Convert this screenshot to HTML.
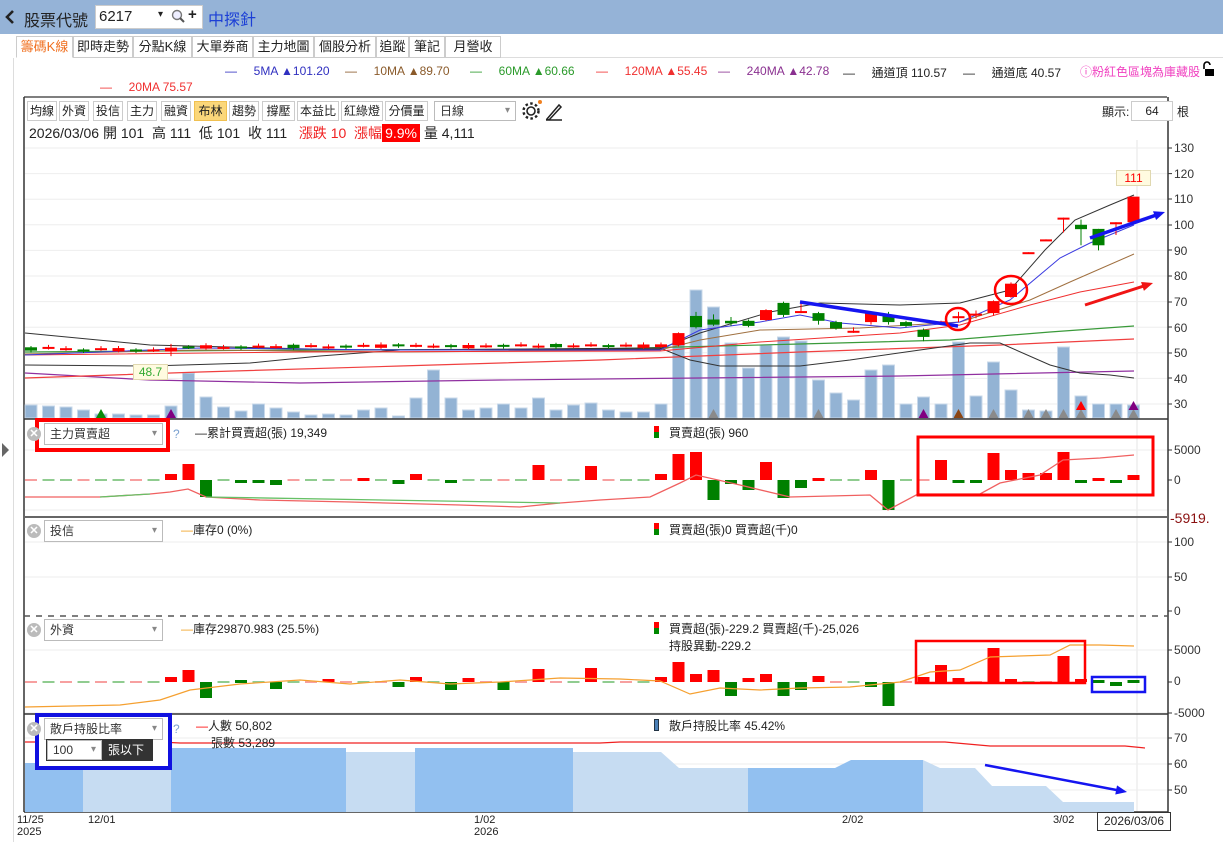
<!DOCTYPE html>
<html><head><meta charset="utf-8">
<style>
*{box-sizing:border-box}
body{margin:0;width:1223px;height:842px;overflow:hidden;background:#fff;font-family:"Liberation Sans","Noto Sans CJK TC",sans-serif;font-size:13px;color:#222;position:relative}
.a{position:absolute;white-space:nowrap}
.tab{position:absolute;top:36px;height:22px;border:1px solid #ccc;background:#fff;font-size:13px;line-height:20px;text-align:center}
.btn{position:absolute;top:101px;height:20px;border:1px solid #ccc;background:#fff;font-size:12px;line-height:18px;text-align:center}
.sel{position:absolute;height:22px;border:1px solid #bbb;background:#fff;font-size:12px;line-height:20px;padding-left:5px;color:#333}
.sel:after{content:"▾";position:absolute;right:5px;top:0;color:#888;font-size:10px}
.x{position:absolute;width:14px;height:14px;border-radius:50%;background:#bbb;color:#fff;font-size:11px;line-height:14px;text-align:center;font-weight:bold}
.ax{position:absolute;left:1174px;font-size:12px;color:#333}
</style></head><body>
<div class="a" style="left:0;top:0;width:1223px;height:34px;background:#95b3d7"></div>
<svg class="a" style="left:4px;top:9px" width="12" height="16"><path d="M9 2 L3 8 L9 14" fill="none" stroke="#222" stroke-width="2.6"/></svg>
<div class="a" style="left:24px;top:7px;font-size:16px;color:#222">股票代號</div>
<div class="a" style="left:95px;top:5px;width:108px;height:24px;background:#fff;border:1px solid #ccc"></div>
<div class="a" style="left:99px;top:8px;font-size:15px">6217</div>
<div class="a" style="left:158px;top:9px;font-size:10px">▾</div>
<svg class="a" style="left:171px;top:9px" width="18" height="16"><circle cx="6" cy="6" r="4.5" fill="#eef" stroke="#777" stroke-width="1.4"/><line x1="9" y1="9" x2="13" y2="13" stroke="#555" stroke-width="2"/></svg>
<div class="a" style="left:188px;top:6px;font-size:15px;font-weight:bold">+</div>
<div class="a" style="left:208px;top:6px;font-size:16px;color:#1c3fd6">中探針</div>

<div class="a" style="left:13px;top:58px;width:1px;height:784px;background:#ddd"></div>
<div class="a" style="left:60px;top:57px;width:1163px;height:1px;background:#ddd"></div>
<svg class="a" style="left:2px;top:443px" width="8" height="14"><polygon points="0,0 7,7 0,14" fill="#666"/></svg>

<div class="tab" style="left:16px;width:57px;color:#f07020;border-bottom-color:#fff">籌碼K線</div>
<div class="tab" style="left:73px;width:60px">即時走勢</div>
<div class="tab" style="left:133px;width:59px">分點K線</div>
<div class="tab" style="left:192px;width:61px">大單券商</div>
<div class="tab" style="left:253px;width:61px">主力地圖</div>
<div class="tab" style="left:314px;width:62px">個股分析</div>
<div class="tab" style="left:376px;width:33px">追蹤</div>
<div class="tab" style="left:409px;width:36px">筆記</div>
<div class="tab" style="left:445px;width:56px">月營收</div>

<div class="a" style="top:64px;left:225px;font-size:12px;color:#3030c0">—&nbsp;&nbsp;&nbsp;&nbsp;&nbsp;5MA ▲101.20</div>
<div class="a" style="top:64px;left:345px;font-size:12px;color:#8a5a2a">—&nbsp;&nbsp;&nbsp;&nbsp;&nbsp;10MA ▲89.70</div>
<div class="a" style="top:64px;left:470px;font-size:12px;color:#2a9a2a">—&nbsp;&nbsp;&nbsp;&nbsp;&nbsp;60MA ▲60.66</div>
<div class="a" style="top:64px;left:596px;font-size:12px;color:#f03030">—&nbsp;&nbsp;&nbsp;&nbsp;&nbsp;120MA ▲55.45</div>
<div class="a" style="top:64px;left:718px;font-size:12px;color:#8a3090">—&nbsp;&nbsp;&nbsp;&nbsp;&nbsp;240MA ▲42.78</div>
<div class="a" style="top:64px;left:843px;font-size:12px;color:#222">—&nbsp;&nbsp;&nbsp;&nbsp;&nbsp;通道頂 110.57</div>
<div class="a" style="top:64px;left:963px;font-size:12px;color:#222">—&nbsp;&nbsp;&nbsp;&nbsp;&nbsp;通道底 40.57</div>
<div class="a" style="top:63px;left:1080px;font-size:12px;color:#f040c0">ⓘ粉紅色區塊為庫藏股</div>
<svg class="a" style="left:1201px;top:61px" width="14" height="16"><path d="M3 8 V4 a3 3 0 0 1 6 0" fill="none" stroke="#000" stroke-width="1.6"/><rect x="4" y="8" width="9" height="7" fill="#000"/></svg>
<div class="a" style="top:80px;left:100px;font-size:12px;color:#f03030">—&nbsp;&nbsp;&nbsp;&nbsp;&nbsp;20MA 75.57</div>

<svg class="a" style="left:0;top:0" width="1223" height="842" id="cv"></svg>

<div class="btn" style="left:27px;width:30px">均線</div>
<div class="btn" style="left:59px;width:30px">外資</div>
<div class="btn" style="left:93px;width:30px">投信</div>
<div class="btn" style="left:127px;width:30px">主力</div>
<div class="btn" style="left:161px;width:30px">融資</div>
<div class="btn" style="left:194px;width:33px;background:#fbd77a;border-color:#f0c050">布林</div>
<div class="btn" style="left:229px;width:30px">趨勢</div>
<div class="btn" style="left:262px;width:33px">撐壓</div>
<div class="btn" style="left:297px;width:42px">本益比</div>
<div class="btn" style="left:341px;width:42px">紅綠燈</div>
<div class="btn" style="left:385px;width:43px">分價量</div>
<div class="sel" style="left:434px;top:101px;width:82px;height:20px;line-height:18px">日線</div>
<svg class="a" style="left:521px;top:99px" width="44" height="24"><circle cx="10" cy="12" r="4" fill="none" stroke="#222" stroke-width="1.6"/><circle cx="10" cy="12" r="7.5" fill="none" stroke="#222" stroke-width="2.4" stroke-dasharray="2.5 2.4"/><circle cx="19" cy="3" r="2" fill="#f08020"/><path d="M26 20 L38 6 L40 8 L28 21 Z M25 21 H41" fill="none" stroke="#222" stroke-width="1.5"/></svg>
<div class="a" style="left:1102px;top:103px;font-size:12px">顯示:</div>
<div class="a" style="left:1131px;top:101px;width:42px;height:20px;border:1px solid #ccc;font-size:12px;line-height:18px;text-align:center;background:#fff">64</div>
<div class="a" style="left:1177px;top:103px;font-size:12px">根</div>

<div class="a" style="left:29px;top:123px;font-size:14px;color:#222">2026/03/06 開 101&nbsp; 高 111&nbsp; 低 101&nbsp; 收 111&nbsp;&nbsp; <span style="color:#f02020">漲跌 10&nbsp; 漲幅</span><span style="background:#f00;color:#fff;padding:1px 3px">9.9%</span> 量 4,111</div>

<div class="a" style="left:1116px;top:170px;width:35px;height:16px;background:#fffbe0;border:1px solid #e0d8b0;color:#f00;font-size:12px;text-align:center;line-height:14px">111</div>
<div class="a" style="left:133px;top:364px;width:35px;height:16px;background:#fffbe0;border:1px solid #e0d8b0;color:#3a3;font-size:12px;text-align:center;line-height:14px">48.7</div>

<div class="ax" style="top:141px">130</div><div class="ax" style="top:167px">120</div><div class="ax" style="top:192px">110</div><div class="ax" style="top:218px">100</div><div class="ax" style="top:244px">90</div><div class="ax" style="top:269px">80</div><div class="ax" style="top:295px">70</div><div class="ax" style="top:321px">60</div><div class="ax" style="top:346px">50</div><div class="ax" style="top:372px">40</div><div class="ax" style="top:397px">30</div>
<div class="ax" style="top:443px">5000</div><div class="ax" style="top:473px">0</div>
<div class="a" style="left:1170px;top:510px;font-size:14px;color:#8a1010">-5919.</div>
<div class="ax" style="top:535px">100</div><div class="ax" style="top:570px">50</div><div class="ax" style="top:604px">0</div>
<div class="ax" style="top:643px">5000</div><div class="ax" style="top:674px">0</div><div class="ax" style="top:706px">-5000</div>
<div class="ax" style="top:731px">70</div><div class="ax" style="top:757px">60</div><div class="ax" style="top:783px">50</div>

<div class="x" style="left:27px;top:427px">✕</div>
<div class="sel" style="left:44px;top:423px;width:119px">主力買賣超</div>
<div class="a" style="left:173px;top:427px;color:#7aa0d0;font-size:12px">?</div>
<div class="a" style="left:195px;top:424px;font-size:12px">—累計買賣超(張) 19,349</div>
<div class="a" style="left:654px;top:424px;font-size:12px"><span style="display:inline-block;width:5px;height:12px;background:linear-gradient(#f00 50%,#080 50%);vertical-align:-1px"></span>&nbsp;&nbsp;&nbsp;買賣超(張) 960</div>

<div class="x" style="left:27px;top:524px">✕</div>
<div class="sel" style="left:44px;top:520px;width:119px">投信</div>
<div class="a" style="left:181px;top:521px;font-size:12px"><span style="color:#f0a020">—</span>庫存0 (0%)</div>
<div class="a" style="left:654px;top:521px;font-size:12px"><span style="display:inline-block;width:5px;height:12px;background:linear-gradient(#f00 50%,#080 50%);vertical-align:-1px"></span>&nbsp;&nbsp;&nbsp;買賣超(張)0 買賣超(千)0</div>

<div class="x" style="left:27px;top:623px">✕</div>
<div class="sel" style="left:44px;top:619px;width:119px">外資</div>
<div class="a" style="left:181px;top:620px;font-size:12px"><span style="color:#f0a020">—</span>庫存29870.983 (25.5%)</div>
<div class="a" style="left:654px;top:620px;font-size:12px"><span style="display:inline-block;width:5px;height:12px;background:linear-gradient(#f00 50%,#080 50%);vertical-align:-1px"></span>&nbsp;&nbsp;&nbsp;買賣超(張)-229.2 買賣超(千)-25,026</div>
<div class="a" style="left:669px;top:637px;font-size:12px">持股異動-229.2</div>

<div class="a" style="left:39px;top:717px;width:129px;height:49px;background:#fff"></div>
<div class="x" style="left:27px;top:722px">✕</div>
<div class="sel" style="left:44px;top:718px;width:119px">散戶持股比率</div>
<div class="a" style="left:46px;top:739px;width:107px;height:22px;background:#333"></div>
<div class="sel" style="left:47px;top:740px;width:55px;height:20px;line-height:18px">100</div>
<div class="a" style="left:108px;top:741px;color:#fff;font-size:12px">張以下</div>
<div class="a" style="left:173px;top:722px;color:#7aa0d0;font-size:12px">?</div>
<div class="a" style="left:196px;top:717px;font-size:12px"><span style="color:#f00">—</span>人數 50,802</div>
<div class="a" style="left:211px;top:734px;font-size:12px">張數 53,289</div>
<div class="a" style="left:654px;top:717px;font-size:12px"><span style="display:inline-block;width:5px;height:12px;background:#4a80b8;border:1px solid #234;vertical-align:-1px"></span>&nbsp;&nbsp;&nbsp;散戶持股比率 45.42%</div>

<div class="a" style="left:17px;top:814px;font-size:11px">11/25</div>
<div class="a" style="left:17px;top:826px;font-size:11px">2025</div>
<div class="a" style="left:88px;top:814px;font-size:11px">12/01</div>
<div class="a" style="left:474px;top:814px;font-size:11px">1/02</div>
<div class="a" style="left:474px;top:826px;font-size:11px">2026</div>
<div class="a" style="left:842px;top:814px;font-size:11px">2/02</div>
<div class="a" style="left:1053px;top:814px;font-size:11px">3/02</div>
<div class="a" style="left:1097px;top:812px;width:74px;height:19px;border:1px solid #333;background:#fff;font-size:12px;text-align:center;line-height:17px">2026/03/06</div>

<script>
var s=document.getElementById('cv'),h='';
function X(i){return 31+i*17.5}
function Y(p){return 148+(130-p)*2.56}
function L(pts,c,w,extra){h+='<polyline points="'+pts.map(function(p){return p[0]+','+p[1]}).join(' ')+'" fill="none" stroke="'+c+'" stroke-width="'+(w||1)+'" '+(extra||'')+'/>'}
function R(x,y,w,hh,c,extra){h+='<rect x="'+x+'" y="'+y+'" width="'+w+'" height="'+hh+'" fill="'+c+'" '+(extra||'')+'/>'}
L([[24,97],[1167,97]],'#555',1.5);L([[24,97],[24,812]],'#333',1.5);L([[1168,97],[1168,812]],'#333',1.5);
L([[1137,140],[1137,812]],'#e4e4e4',1);
for(var p=30;p<=130;p+=10)L([[25,Y(p)],[1167,Y(p)]],'#eee',1);
[450,510].forEach(function(y){L([[25,y],[1167,y]],'#eee',1)});
[542,577].forEach(function(y){L([[25,y],[1167,y]],'#eee',1)});
[650,713].forEach(function(y){L([[25,y],[1167,y]],'#eee',1)});
[738,764,790].forEach(function(y){L([[25,y],[1167,y]],'#eee',1)});
[148,173.6,199,225,250,276,302,327,353,378,404,450,480,542,577,611,650,682,713,738,764,790].forEach(function(y){L([[1168,y],[1172,y]],'#333',1)});
var vt=[405,406,407,410,414,414,415,415,406,373,397,407,411,404,408,412,415,414,415,410,408,416,398,370,398,410,408,404,408,398,410,405,403,410,412,412,404,342,290,307,343,368,345,337,341,380,393,400,370,365,404,397,404,342,396,362,390,410,411,347,396,404,404,405];
for(var i=0;i<64;i++)R(X(i)-6,vt[i],12,418-vt[i],'#93b3d4','stroke="#c8d8ea" stroke-width="1"');
L([[24,419],[1168,419]],'#333',1.5);L([[24,517],[1168,517]],'#666',2);L([[24,616],[1168,616]],'#555',1.5,'stroke-dasharray="6 6"');L([[24,714],[1168,714]],'#333',1.5);L([[24,812],[1168,812]],'#333',1.5);
function T(i,c,y){var x=X(i);h+='<polygon points="'+(x-5)+','+(y)+' '+x+','+(y-9)+' '+(x+5)+','+y+'" fill="'+c+'"/>'}
T(4,'#0a8a0a',418);T(8,'#800080',418);[39,45,57,58,59,60,62,63,55].forEach(function(i){T(i,'#8a8a8a',418)});T(51,'#800080',418);T(53,'#8b4513',418);T(60,'#f00',410);T(63,'#800080',410);
L([[25,373],[150,380],[300,383],[500,380],[700,378],[900,376],[1134,371]],'#9030a0',1.2);
L([[25,378],[200,372],[400,366],[600,360],[800,352],[1000,345],[1134,339]],'#f04040',1.2);
L([[25,352],[300,350],[600,349],[800,344],[950,340],[1050,332],[1134,326]],'#3a9a3a',1.2);
L([[25,333],[150,345],[350,350],[660,349],[700,333],[770,312],[820,303],[900,305],[960,303],[1010,290],[1045,250],[1075,220],[1110,205],[1134,195]],'#333',1);
L([[25,365],[150,366],[250,363],[320,356],[400,350],[660,348],[690,360],[720,366],[800,366],[850,360],[920,350],[970,343],[1000,343],[1050,365],[1080,373],[1110,375],[1134,378]],'#333',1);
L([[25,354],[200,350],[400,352],[660,350],[700,340],[760,330],[860,328],[960,322],[1030,300],[1070,282],[1134,254]],'#a07040',1);
L([[25,355],[300,352],[660,351],[760,342],[900,333],[960,325],[1030,305],[1080,292],[1134,282]],'#f03030',1);
L([[25,355],[100,352],[200,348],[400,350],[660,350],[700,330],[760,322],[800,315],[840,323],[900,328],[960,322],[1010,300],[1060,258],[1090,243],[1134,225]],'#3a3ae0',1);
var cd={};
var base=[51.5,52,51.5,51,51.5,51.2,51,51,50.5,52,52.3,52,52.2,52.5,52.3,52.5,52.7,52.2,52.5,52.8,52.6,53,52.8,52.5,52.7,52.4,52.6,52.8,53,52.5,52.8,52.6,53,52.7,52.9,52.6];
for(var i=0;i<36;i++){var b=base[i],up=(i*7%3)!=0,d=(i%5==0?1.3:0.6);cd[i]=up?[b-d/2,b+d/2,b+d/2+0.8,b-d/2-0.4]:[b+d/2,b-d/2,b+d/2+0.5,b-d/2-0.8]}
cd[8]=[50.5,52,53.5,48.7];cd[9]=[52.5,51.8,53,51.5];
cd[36]=[52.2,53.3,54,52];cd[37]=[53,57.7,58,52.5];cd[38]=[64.4,60,66,59.5];cd[39]=[63,61,65,60.5];cd[40]=[62.5,61.5,64,60.5];cd[41]=[62.5,60.5,63,60];cd[42]=[62.8,66.7,67,62.5];cd[43]=[69.5,64.8,70,64];cd[44]=[66,66.3,70,65.5];cd[45]=[65.5,62.5,66,61];cd[46]=[62,59.5,62.5,59];cd[47]=[58.2,58.6,60,57.8];cd[48]=[62,65.5,66,61];cd[49]=[64.5,62,66,61];cd[50]=[62,60.5,62.5,60];cd[51]=[59,56.2,59.5,54.5];cd[52]=[62,62.3,62.5,61.8];cd[53]=[63.7,64.3,66,62];cd[54]=[65,65.3,66.5,63.5];cd[55]=[65.5,70.2,70.5,64.5];cd[56]=[71.8,77,77.5,71.5];cd[57]=[89,89.3,89.3,89];cd[58]=[94,94.3,94.3,94];cd[59]=[102.3,102.8,102.8,97];cd[60]=[100,98.3,102,92];cd[61]=[98.4,92,98.4,90];cd[62]=[100.5,101,101,96];cd[63]=[101,111,111,101];
for(var i=0;i<64;i++){var c=cd[i],x=X(i),o=c[0],cl=c[1],col=cl>=o?'#ff0000':'#008000';
L([[x,Y(c[2])],[x,Y(c[3])]],col,1);var t=Y(Math.max(o,cl)),bt=Y(Math.min(o,cl));R(x-6,t,12,Math.max(2,bt-t),col)}
h+='<line x1="800" y1="302" x2="958" y2="326" stroke="#1515f0" stroke-width="3.5"/>';
h+='<ellipse cx="958" cy="319" rx="12" ry="11" fill="none" stroke="#f00" stroke-width="2.5"/><ellipse cx="1011" cy="290" rx="16" ry="14" fill="none" stroke="#f00" stroke-width="2.5"/>';
function A(x1,y1,x2,y2,c,w){var a=Math.atan2(y2-y1,x2-x1),l=12;h+='<line x1="'+x1+'" y1="'+y1+'" x2="'+(x2-Math.cos(a)*8)+'" y2="'+(y2-Math.sin(a)*8)+'" stroke="'+c+'" stroke-width="'+w+'"/><polygon points="'+x2+','+y2+' '+(x2-l*Math.cos(a-0.4))+','+(y2-l*Math.sin(a-0.4))+' '+(x2-l*Math.cos(a+0.4))+','+(y2-l*Math.sin(a+0.4))+'" fill="'+c+'"/>'}
A(1090,238,1165,212,'#1515f0',3.5);A(1085,305,1153,283,'#f01515',3);
var b2={8:6,9:16,10:-17,12:-3,13:-3,14:-5,19:3,21:-4,22:6,24:-3,29:15,32:14,36:6,37:26,38:28,39:-20,40:-4,41:-10,42:18,43:-18,44:-8,45:2,48:10,49:-30,52:20,53:-2,54:-2,55:27,56:10,57:7,58:7,59:28,60:-2,61:2,62:-2,63:5};
for(var i=0;i<64;i++){var v=b2[i];if(v===undefined){R(X(i)-6,479,12,2,(i%3==0?'#f7a0a0':'#90cc90'));continue}
var col=v>0?'#ff0000':'#008000';if(Math.abs(v)<=3){R(X(i)-6,v>0?478:480,12,3,col)}else R(X(i)-6,v>0?480-v:480,12,Math.abs(v),col)}
L([[25,497],[100,497],[150,494],[170,492],[188,489],[206,497],[260,500],[350,502],[460,505],[520,507],[560,503],[600,500],[650,497],[680,483],[696,475],[740,485],[790,497],[870,495],[888,510],[918,494],[980,494],[1000,483],[1040,475],[1063,460],[1100,458],[1134,455]],'#f06060',1.3);
L([[100,497],[150,494]],'#66c066',1.3);L([[206,497],[560,503]],'#66c066',1.3);
var b4={8:5,9:12,10:-16,12:-2,14:-7,17:3,21:-5,22:5,24:-8,25:4,27:-8,29:13,32:14,36:5,37:20,38:8,39:12,40:-14,41:4,42:8,43:-14,44:-8,45:6,48:-5,49:-24,51:5,52:17,53:4,55:34,56:3,59:26,60:3,61:-1,62:-4,63:-1};
for(var i=0;i<64;i++){var v=b4[i];if(v===undefined){R(X(i)-6,681,12,2,(i%2==0?'#f7a0a0':'#90cc90'));continue}
var col=v>0?'#ff0000':'#008000';if(Math.abs(v)<=2)R(X(i)-6,680,12,3,col);else R(X(i)-6,v>0?682-v:682,12,Math.abs(v),col)}
L([[25,707],[120,705],[160,700],[190,690],[240,684],[300,680],[350,684],[400,680],[450,684],[500,682],[560,678],[620,679],[660,681],[690,694],[720,688],[760,690],[800,688],[850,687],[900,682],[930,672],[960,670],[990,657],[1050,655],[1070,645],[1100,645],[1134,646]],'#f5a030',1.2);
h+='<rect x="918" y="437" width="235" height="58" fill="none" stroke="#f00" stroke-width="3"/>';
h+='<rect x="916" y="641" width="169" height="42" fill="none" stroke="#f00" stroke-width="2.5"/>';
h+='<rect x="1092" y="677" width="53" height="15" fill="none" stroke="#1515f0" stroke-width="2.5"/>';
h+='<rect x="37" y="420" width="131" height="30" fill="none" stroke="#f00" stroke-width="4"/>';
function P(pts,c){h+='<polygon points="'+pts.map(function(p){return p[0]+','+p[1]}).join(' ')+'" fill="'+c+'"/>'}
var LC='#c6dcf2',DC='#92c0f0';
P([[25,812],[25,763],[83,763],[83,812]],DC);
P([[83,812],[83,763],[171,763],[171,812]],LC);
P([[171,812],[171,748],[346,748],[346,812]],DC);
P([[346,812],[346,752],[415,752],[415,812]],LC);
P([[415,812],[415,748],[573,748],[573,812]],DC);
P([[573,812],[573,752],[661,752],[679,768],[748,768],[748,812]],LC);
P([[748,812],[748,768],[835,768],[851,760],[923,760],[923,812]],DC);
P([[923,812],[923,760],[940,768],[975,768],[992,786],[1046,786],[1063,802],[1134,802],[1134,812]],LC);
L([[25,742],[160,742],[180,743],[600,743],[620,742],[945,742],[990,746],[1125,746],[1145,748]],'#f02020',1.2);
A(985,765,1127,792,'#1515f0',2.5);
h+='<rect x="37" y="715" width="133" height="53" fill="none" stroke="#1010e0" stroke-width="4"/>';
s.innerHTML=h;
</script>
</body></html>
